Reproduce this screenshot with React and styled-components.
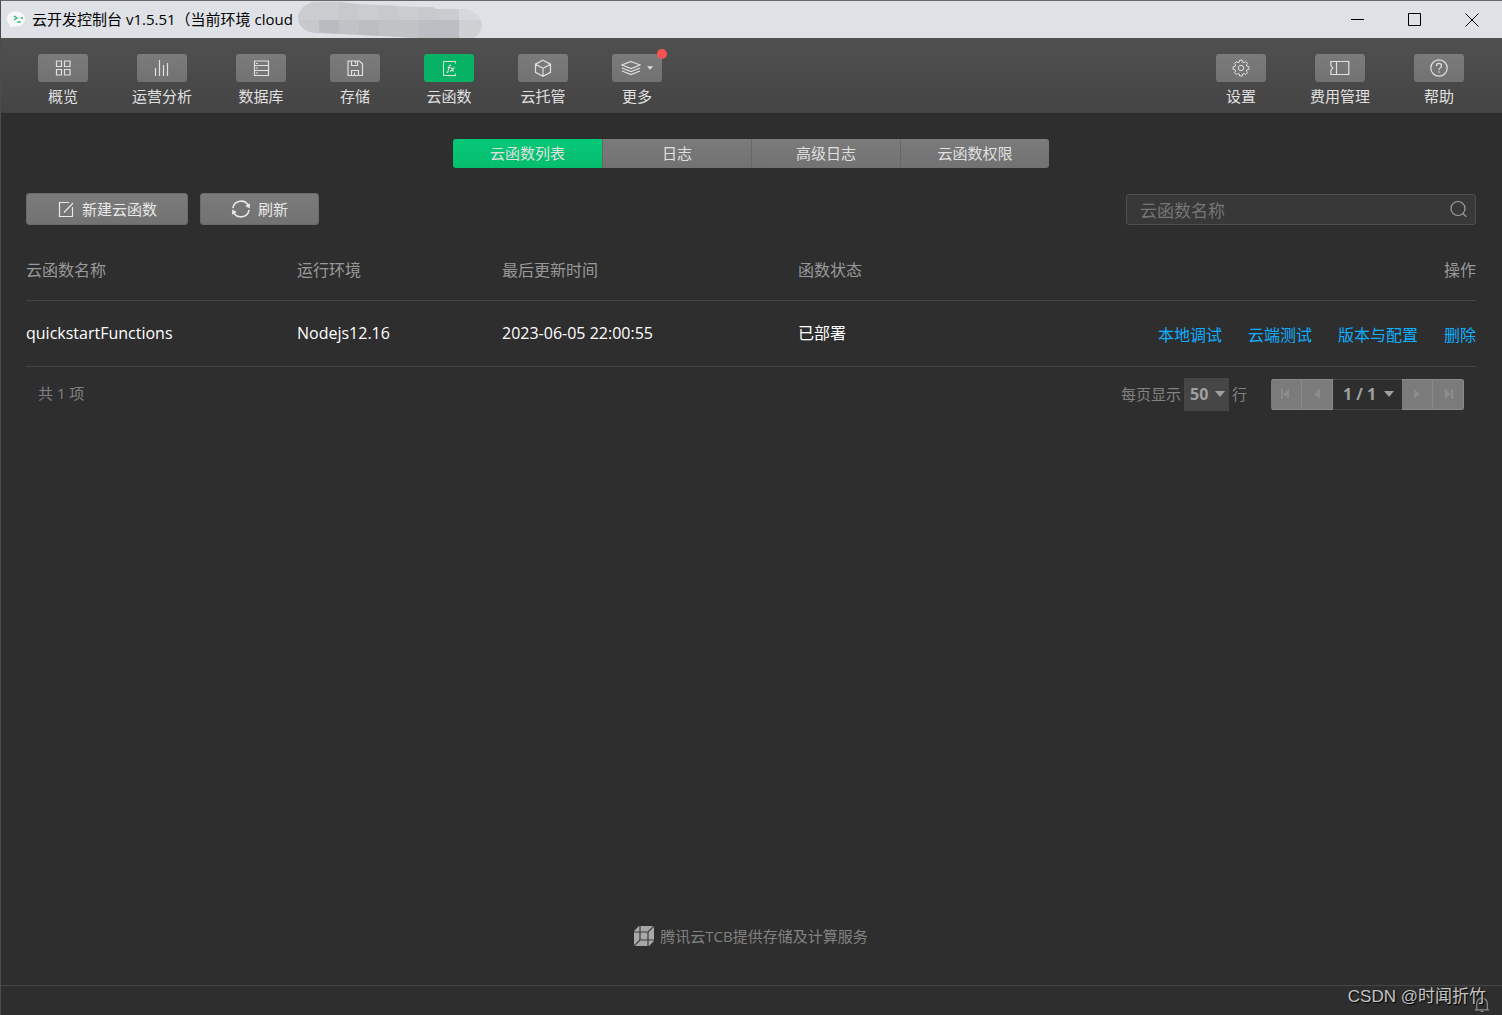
import React from "react";
import styled, { createGlobalStyle, css } from "styled-components";

const GlobalStyle = createGlobalStyle`
  * {
    box-sizing: border-box;
  }

  body {
    margin: 0;
    background: #2e2e2e;
    font-family: "Open Sans", "Noto Sans CJK SC", sans-serif;
    font-size: 15px;
    line-height: 20px;
    color: #e0e0e0;
  }

  button,
  input,
  select {
    font: inherit;
    color: inherit;
  }
`;

/* ---------- icons ---------- */

const Icon = ({ size = 18, children, ...rest }) => (
  <svg
    width={size}
    height={size}
    viewBox="0 0 18 18"
    fill="none"
    stroke="currentColor"
    strokeWidth="1"
    aria-hidden="true"
    {...rest}
  >
    {children}
  </svg>
);

const OverviewIcon = () => (
  <Icon>
    <path d="M2.5 2h5v5.500h-5zM10.500 2h5.500v5.500h-5.500zM2.500 10.500h5v5.500h-5zM10.500 10.500h5.500v5.500h-5.500z" strokeWidth="1.200" />
  </Icon>
);

const ChartIcon = () => (
  <Icon>
    <path d="M2.5 9v8M6.5 1v16M10.5 6v11M14.5 4v13" strokeWidth="1.2" />
  </Icon>
);

const DatabaseIcon = () => (
  <Icon>
    <path d="M2.5 2h14v14.500h-14zM2.5 6.500h14M2.500 11.500h14M4 4.500h2M4 9h2M4 14h2" strokeWidth="1.200" />
  </Icon>
);

const StorageIcon = () => (
  <Icon>
    <path
      d="M2 2h11.500l3 3v11.500H2zM5.500 2v4.500h6V2M5.500 16.500v-5h7v5M9.500 2.500v2M8.500 13.500v3"
      strokeWidth="1.200"
    />
  </Icon>
);

const FunctionIcon = () => (
  <Icon>
    <path d="M15.500 4.500v-2h-12v14h12v-2" />
    <path
      d="M11 6.500c-1.200-.5-1.800.2-2 1.300l-1 4.500c-.2.900-.6 1.200-1.400 1M7.500 8.500h3M11 8.500l2.500 4M14.500 8.500l-4.500 4"
      strokeWidth="1.100"
    />
  </Icon>
);

const CubeIcon = () => (
  <Icon>
    <path
      d="M9 1.200l7.500 4v8.100L9 17.300l-7.500-4V5.200zM1.500 5.200L9 9.300l7.500-4.100M9 9.300v8"
      strokeWidth="1.200"
    />
  </Icon>
);

const LayersIcon = () => (
  <Icon width={20}>
    <path d="M9 2.500l9 3.500-9 3.500L0 6zM0 9l9 3.500L18 9M0 12l9 3.500 9-3.500" strokeWidth="1.200" />
  </Icon>
);

const GearIcon = () => (
  <Icon>
    <circle cx="9" cy="9" r="2.700" />
    <path
      strokeLinejoin="round"
      d="M7.700 1.200h2.600l.4 2 1.300.5 1.700-1.100 1.800 1.800-1.100 1.700.5 1.300 2 .4v2.600l-2 .4-.5 1.300 1.100 1.700-1.800 1.800-1.700-1.100-1.300.5-.4 2H7.700l-.4-2-1.300-.5-1.700 1.100-1.800-1.800 1.100-1.700-.5-1.300-2-.4V7.800l2-.4.5-1.300-1.100-1.700 1.800-1.800L6 3.700l1.300-.5z"
    />
  </Icon>
);

const TicketIcon = () => (
  <Icon width={20} height={18} viewBox="0 0 20 18">
    <path d="M.8 2.500h18v13h-18v-3.800l2-2.700-2-2.700zM6.500 2.500v13" strokeWidth="1.200" />
  </Icon>
);

const HelpIcon = () => (
  <Icon>
    <circle cx="9" cy="9" r="8.200" strokeWidth="1.200" />
    <path d="M6.500 7c0-3.400 5-3.400 5 0 0 1.900-2.500 1.900-2.500 4M9 12.300v1.500" strokeWidth="1.200" />
  </Icon>
);

const EditIcon = () => (
  <Icon>
    <path d="M12 2.500H2.500v14h13V7M7 12.500L16 3" strokeWidth="1.200" />
  </Icon>
);

const RefreshIcon = () => (
  <Icon size={20}>
    <path d="M1.700 8.200a7.400 7.400 0 0 1 14-2M16.300 9.800a7.400 7.400 0 0 1-14 2" strokeWidth="1.400" />
    <path d="M17.200 3.800l-.4 4.700-4-2.300zM.8 14.200l.4-4.700 4 2.300z" fill="currentColor" stroke="none" />
  </Icon>
);

const SearchIcon = () => (
  <Icon>
    <circle cx="9" cy="8.500" r="7" strokeWidth="1.200" />
    <path d="M14 13.500l3.300 3.300" strokeWidth="1.200" />
  </Icon>
);

const BellIcon = () => (
  <Icon size={16}>
    <path d="M1 15.500h16M3 15.500V8.500a6 6 0 0 1 12 0v7M7.500 17.200h3" strokeWidth="1.400" />
  </Icon>
);

const Triangle = ({ direction = "down", bar, size = 10 }) => {
  const shapes = {
    down: "M0 2h10L5 8z",
    left: "M8 0v10L2 5z",
    right: "M2 0v10l6-5z",
  };
  return (
    <svg width={size} height={size} viewBox="0 0 10 10" fill="currentColor" aria-hidden="true">
      <path d={shapes[direction]} />
      {bar && <path d={direction === "left" ? "M0 0h2v10H0z" : "M8 0h2v10H8z"} />}
    </svg>
  );
};

const AppLogo = () => (
  <svg width="20" height="20" viewBox="0 0 20 20" aria-hidden="true">
    <path
      d="M10 1.500C4.500 1.500 1 4.800 1 9c0 2.700 1.300 4.800 3 6v3l3-1.800c1 .3 2 .3 3 .3 5.500 0 9-3.300 9-7.500s-3.500-7.500-9-7.500z"
      fill="#f7f8f7"
    />
    <path d="M8 6l3 2-3 2M11.500 12h3" stroke="#1fb56c" strokeWidth="1.300" fill="none" />
    <circle cx="16" cy="8" r="1" fill="#1fb56c" />
  </svg>
);

const TcbLogo = () => (
  <svg width="20" height="20" viewBox="0 0 20 20" aria-hidden="true">
    <path d="M5 0h15v15l-5 5H0V5z" fill="#a8a8a8" />
    <path
      d="M0 6h14v14M6 0v14h14M0 20l6-6M14 6l6-6"
      stroke="#3c3c3c"
      strokeWidth="1.200"
      fill="none"
    />
  </svg>
);

// mosaic drawn over the environment id
const MaskedId = () => (
  <svg width="188" height="38" viewBox="0 0 188 38" aria-hidden="true">
    <defs>
      <clipPath id="mask-shape">
        <path d="M18 1h25l18 2 60 3h15l4 2h25c25 2 27 26 7 31l-10 0h-36l-2-2-98-5H20C-2 31-5 6 18 1z" />
      </clipPath>
    </defs>
    <g clipPath="url(#mask-shape)">
      <path d="M0 0h188v38H0z" fill="#cbccd0" />
      <path d="M43 0h20v19H43zM83 0h20v19H83zM123 0h20v19h-20z" fill="#c7c9cd" />
      <path d="M0 19h23v19H0z" fill="#c6c8cc" />
      <path d="M23 19h20v19H23z" fill="#b9bbc0" />
      <path d="M43 19h20v19H43z" fill="#c0c2c5" />
      <path d="M63 19h20v19H63z" fill="#bcbdc1" />
      <path d="M83 19h40v19H83z" fill="#c0c2c6" />
      <path d="M123 19h40v19h-40z" fill="#bbbec2" />
      <path d="M163 0h25v19h-25z" fill="#d6d8dd" />
      <path d="M163 19h25v19h-25z" fill="#ced0d4" />
    </g>
  </svg>
);

/* ---------- data ---------- */

const mainNav = [
  { label: "概览", icon: <OverviewIcon /> },
  { label: "运营分析", icon: <ChartIcon /> },
  { label: "数据库", icon: <DatabaseIcon /> },
  { label: "存储", icon: <StorageIcon /> },
  { label: "云函数", icon: <FunctionIcon />, active: true },
  { label: "云托管", icon: <CubeIcon /> },
  { label: "更多", icon: <LayersIcon />, more: true },
];

const sideNav = [
  { label: "设置", icon: <GearIcon /> },
  { label: "费用管理", icon: <TicketIcon /> },
  { label: "帮助", icon: <HelpIcon /> },
];

const tabs = ["云函数列表", "日志", "高级日志", "云函数权限"];

const functions = [
  {
    name: "quickstartFunctions",
    runtime: "Nodejs12.16",
    updated: "2023-06-05 22:00:55",
    status: "已部署",
  },
];

const actions = ["本地调试", "云端测试", "版本与配置", "删除"];

/* ---------- page ---------- */

const NavItem = ({ label, icon, active, more }) => (
  <NavButton type="button">
    <NavTile $active={active}>
      {icon}
      {more && <Triangle size={6} />}
      {more && <Dot />}
    </NavTile>
    {label}
  </NavButton>
);

export default function App() {
  return (
    <Window>
      <GlobalStyle />
      <TitleBar>
        <AppLogo />
        <Title>云开发控制台 v1.5.51（当前环境 cloud</Title>
        <MaskedId />
        <WindowControls>
          <WindowButton type="button" aria-label="最小化">
            <svg width="14" height="14" viewBox="0 0 14 14" stroke="#000" fill="none">
              <path d="M0 6.500h13" />
            </svg>
          </WindowButton>
          <WindowButton type="button" aria-label="最大化">
            <svg width="14" height="14" viewBox="0 0 14 14" stroke="#000" fill="none">
              <path d="M.5 .5h12v12H.5z" />
            </svg>
          </WindowButton>
          <WindowButton type="button" aria-label="关闭">
            <svg width="14" height="14" viewBox="0 0 14 14" stroke="#000" fill="none">
              <path d="M.5 .5l13 13M13.500 .5l-13 13" />
            </svg>
          </WindowButton>
        </WindowControls>
      </TitleBar>

      <Toolbar>
        <NavGroup>
          {mainNav.map((item) => (
            <NavItem key={item.label} {...item} />
          ))}
        </NavGroup>
        <NavGroup>
          {sideNav.map((item) => (
            <NavItem key={item.label} {...item} />
          ))}
        </NavGroup>
      </Toolbar>

      <Content>
        <Tabs>
          {tabs.map((tab, i) => (
            <Tab key={tab} type="button" $active={i === 0}>
              {tab}
            </Tab>
          ))}
        </Tabs>

        <ActionRow>
          <ActionButton type="button">
            <EditIcon />
            新建云函数
          </ActionButton>
          <ActionButton type="button">
            <RefreshIcon />
            刷新
          </ActionButton>
          <SearchBox>
            <input type="text" placeholder="云函数名称" aria-label="云函数名称" />
            <SearchIcon />
          </SearchBox>
        </ActionRow>

        <FunctionTable>
          <colgroup>
            <Col $width={271} />
            <Col $width={205} />
            <Col $width={296} />
            <Col $width={160} />
            <col />
          </colgroup>
          <thead>
            <tr>
              <th>云函数名称</th>
              <th>运行环境</th>
              <th>最后更新时间</th>
              <th>函数状态</th>
              <th>操作</th>
            </tr>
          </thead>
          <tbody>
            {functions.map((fn) => (
              <tr key={fn.name}>
                <td>{fn.name}</td>
                <td>{fn.runtime}</td>
                <td>{fn.updated}</td>
                <td>{fn.status}</td>
                <td>
                  <Links>
                    {actions.map((action) => (
                      <a key={action} href="#">
                        {action}
                      </a>
                    ))}
                  </Links>
                </td>
              </tr>
            ))}
          </tbody>
        </FunctionTable>

        <Pagination>
          <Total>共 1 项</Total>
          <PageSize>
            <label htmlFor="page-size">每页显示</label>
            <SelectBox $filled>
              <select id="page-size" defaultValue="50">
                <option>50</option>
              </select>
              <Triangle />
            </SelectBox>
            <span>行</span>
          </PageSize>
          <Pager>
            <PageButton type="button" disabled aria-label="首页">
              <Triangle direction="left" bar />
            </PageButton>
            <PageButton type="button" disabled aria-label="上一页">
              <Triangle direction="left" />
            </PageButton>
            <SelectBox>
              <select aria-label="页码" defaultValue="1 / 1">
                <option>1 / 1</option>
              </select>
              <Triangle />
            </SelectBox>
            <PageButton type="button" disabled aria-label="下一页">
              <Triangle direction="right" />
            </PageButton>
            <PageButton type="button" disabled aria-label="末页">
              <Triangle direction="right" bar />
            </PageButton>
          </Pager>
        </Pagination>

        <Provider>
          <TcbLogo />
          腾讯云TCB提供存储及计算服务
        </Provider>
      </Content>

      <StatusBar>
        <BellIcon />
        <Watermark>CSDN @时闻折竹</Watermark>
      </StatusBar>
    </Window>
  );
}

/* ---------- styles ---------- */

const greyFace = css`
  background: linear-gradient(#7b7b7b, #727272);
`;

const Window = styled.div`
  display: flex;
  flex-direction: column;
  min-height: 100vh;
  border-top: 1px solid #66686a;
  border-left: 1px solid #4a4c4e;
`;

const TitleBar = styled.header`
  display: flex;
  align-items: center;
  height: 37px;
  padding: 0 2px 0 5px;
  background: #dee1e6;
  color: #000;
`;

const Title = styled.span`
  margin: 0 3px 0 6px;
  padding-bottom: 2px;
  white-space: nowrap;
  font-size: 15px;
`;

const WindowControls = styled.div`
  display: flex;
  margin-left: auto;
`;

const WindowButton = styled.button`
  display: flex;
  align-items: center;
  justify-content: center;
  width: 57px;
  height: 37px;
  padding: 0;
  border: 0;
  background: none;
`;

const Toolbar = styled.nav`
  display: flex;
  justify-content: space-between;
  padding: 16px 38px 7px 37px;
  border-bottom: 1px solid #2a2a2a;
  background: linear-gradient(#505050, #444444);
`;

const NavGroup = styled.div`
  display: flex;
  gap: 44px;
`;

const NavButton = styled.button`
  display: flex;
  flex-direction: column;
  align-items: center;
  gap: 4px;
  padding: 0;
  border: 0;
  background: none;
  line-height: 20px;
  color: #e0e0e0;
  white-space: nowrap;
`;

const NavTile = styled.span`
  position: relative;
  display: flex;
  align-items: center;
  justify-content: center;
  gap: 6px;
  width: 50px;
  height: 28px;
  border-radius: 3px;
  ${greyFace}
  ${(props) => props.$active && "background: #07b265;"}
`;

const Dot = styled.i`
  position: absolute;
  top: -5px;
  right: -5px;
  width: 10px;
  height: 10px;
  border-radius: 50%;
  background: #fa5151;
`;

const Content = styled.main`
  display: flex;
  flex: 1;
  flex-direction: column;
  padding: 25px 26px 39px 25px;
`;

const Tabs = styled.div`
  display: flex;
  align-self: center;
  overflow: hidden;
  border-radius: 3px;
`;

const Tab = styled.button`
  width: 149px;
  height: 29px;
  padding: 0 0 1px;
  border: 0;
  ${greyFace}
  color: #e0e0e0;

  & + & {
    border-left: 1px solid #676767;
  }

  ${(props) => props.$active && "background: linear-gradient(#05c977, #06bd6e);"}
`;

const ActionRow = styled.div`
  display: flex;
  align-items: center;
  gap: 12px;
  margin-top: 25px;
`;

const ActionButton = styled.button`
  display: flex;
  align-items: center;
  gap: 7px;
  height: 32px;
  padding: 0 30px;
  border: 1px solid #6a6a6a;
  border-radius: 3px;
  ${greyFace}
  color: #e8e8e8;
`;

const SearchBox = styled.div`
  display: flex;
  align-items: center;
  width: 350px;
  height: 31px;
  margin-left: auto;
  padding: 0 8px 0 13px;
  border: 1px solid #4f4f4f;
  border-radius: 3px;
  background: #383838;
  color: #a0a0a0;

  input {
    flex: 1;
    min-width: 0;
    padding: 3px 0 0;
    border: 0;
    outline: 0;
    background: none;
    font-size: 17px;
  }

  input::placeholder {
    color: #757575;
    opacity: 1;
  }
`;

const Col = styled.col`
  width: ${(props) => props.$width}px;
`;

const FunctionTable = styled.table`
  width: 100%;
  margin-top: 15px;
  border-collapse: collapse;
  table-layout: fixed;
  font-size: 16px;

  th,
  td {
    padding: 0;
    border-bottom: 1px solid #464646;
    text-align: left;
    font-weight: 400;
  }

  th {
    height: 60px;
    color: #999999;
  }

  td {
    height: 66px;
    color: #ffffff;
  }

  th:last-child {
    text-align: right;
  }
`;

const Links = styled.div`
  display: flex;
  justify-content: flex-end;
  gap: 26px;
  padding-top: 4px;

  a {
    color: #10aeff;
    text-decoration: none;
    white-space: nowrap;
  }
`;

const Pagination = styled.div`
  display: flex;
  align-items: center;
  margin-top: 11px;
  padding: 0 12px;
  color: #828282;
`;

const Total = styled.span`
  margin-right: auto;
  padding-bottom: 2px;
`;

const PageSize = styled.div`
  display: flex;
  align-items: center;
  gap: 3px;
  margin-right: 24px;
`;

const SelectBox = styled.span`
  display: flex;
  align-items: center;
  gap: ${(props) => (props.$filled ? 6 : 7)}px;
  height: ${(props) => (props.$filled ? 33 : 31)}px;
  padding: 0 ${(props) => (props.$filled ? "4px 0 6px" : "8px 0 10px")};
  background: ${(props) => (props.$filled ? "#464646" : "none")};
  ${(props) =>
    !props.$filled &&
    css`
      border: solid #464646;
      border-width: 1px 0;
    `}
  color: #a0a0a0;

  select {
    padding: 0;
    border: 0;
    appearance: none;
    background: none;
    font-size: 16px;
    font-weight: 700;
  }
`;

const Pager = styled.div`
  display: flex;
  overflow: hidden;
  border-radius: 3px;
`;

const PageButton = styled.button`
  display: flex;
  align-items: center;
  justify-content: center;
  width: 31px;
  height: 31px;
  padding: 0;
  border: 1px solid #8a8a8a;
  border-left-width: 0;
  background: #7b7b7b;
  color: #8c8c8c;
`;

const Provider = styled.footer`
  display: flex;
  align-items: center;
  justify-content: center;
  gap: 6px;
  margin-top: auto;
  color: #828282;
`;

const StatusBar = styled.div`
  position: relative;
  display: flex;
  align-items: flex-end;
  justify-content: flex-end;
  height: 30px;
  padding: 0 12px 3px;
  border-top: 1px solid #464646;
  color: #8a8a8a;
`;

const Watermark = styled.span`
  position: absolute;
  top: 1px;
  right: 16px;
  font-family: "Liberation Sans", "Noto Sans CJK SC", sans-serif;
  font-size: 17px;
  color: #c4c4c4;
  text-shadow: 1px 1px 1px #000;
`;
